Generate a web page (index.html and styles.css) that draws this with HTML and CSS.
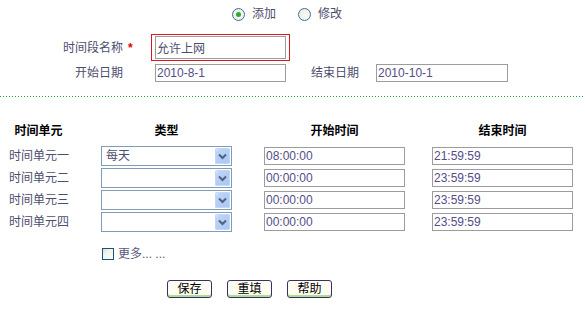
FILE: index.html
```html
<!DOCTYPE html>
<html lang="zh-CN">
<head>
    <meta charset="UTF-8">
    <title>时间段设置</title>
    <link rel="stylesheet" href="styles.css">
</head>
<body>
    <div class="mode">
        <label class="radio"><span class="radio-dot on"></span>添加</label>
        <label class="radio"><span class="radio-dot"></span>修改</label>
    </div>

    <div class="row name-row">
        <span class="label">时间段名称</span><span class="req">*</span>
        <div class="req-box"><input class="text name" type="text" value="允许上网"></div>
    </div>
    <div class="row date-row">
        <span class="label">开始日期</span>
        <input class="text date start-date" type="text" value="2010-8-1">
        <span class="end-label">结束日期</span>
        <input class="text date end-date" type="text" value="2010-10-1">
    </div>

    <div class="divider"></div>

    <div class="units">
        <div class="head c-unit">时间单元</div>
        <div class="head c-type">类型</div>
        <div class="head c-start">开始时间</div>
        <div class="head c-end">结束时间</div>

        <div class="unit c-unit">时间单元一</div>
        <div class="c-type"><div class="select"><span class="select-text">每天</span><span class="drop"><svg width="15" height="16" viewBox="0 0 15 16"><path d="M4 6.5 L7.5 10 L11 6.5" fill="none" stroke="#4d6185" stroke-width="2"/></svg></span></div></div>
        <div class="c-start"><input class="text time" type="text" value="08:00:00"></div>
        <div class="c-end"><input class="text time" type="text" value="21:59:59"></div>

        <div class="unit c-unit">时间单元二</div>
        <div class="c-type"><div class="select"><span class="select-text"></span><span class="drop"><svg width="15" height="16" viewBox="0 0 15 16"><path d="M4 6.5 L7.5 10 L11 6.5" fill="none" stroke="#4d6185" stroke-width="2"/></svg></span></div></div>
        <div class="c-start"><input class="text time" type="text" value="00:00:00"></div>
        <div class="c-end"><input class="text time" type="text" value="23:59:59"></div>

        <div class="unit c-unit">时间单元三</div>
        <div class="c-type"><div class="select"><span class="select-text"></span><span class="drop"><svg width="15" height="16" viewBox="0 0 15 16"><path d="M4 6.5 L7.5 10 L11 6.5" fill="none" stroke="#4d6185" stroke-width="2"/></svg></span></div></div>
        <div class="c-start"><input class="text time" type="text" value="00:00:00"></div>
        <div class="c-end"><input class="text time" type="text" value="23:59:59"></div>

        <div class="unit c-unit">时间单元四</div>
        <div class="c-type"><div class="select"><span class="select-text"></span><span class="drop"><svg width="15" height="16" viewBox="0 0 15 16"><path d="M4 6.5 L7.5 10 L11 6.5" fill="none" stroke="#4d6185" stroke-width="2"/></svg></span></div></div>
        <div class="c-start"><input class="text time" type="text" value="00:00:00"></div>
        <div class="c-end"><input class="text time" type="text" value="23:59:59"></div>
    </div>

    <label class="more"><span class="check"></span>更多... ...</label>

    <div class="buttons">
        <button class="btn">保存</button>
        <button class="btn">重填</button>
        <button class="btn">帮助</button>
    </div>
</body>
</html>
```

FILE: styles.css
```css
body {
    margin: 0;
    padding: 0;
    background: #fff;
    font-family: "Liberation Sans", "Noto Sans CJK SC", sans-serif;
    font-size: 12px;
    line-height: 14px;
    color: #4d4d6d;
}

/* 添加 / 修改 */
.mode {
    display: flex;
    justify-content: center;
    align-items: center;
    height: 28px;
    padding-right: 11px;
    gap: 22px;
}
.radio {
    display: flex;
    align-items: center;
    gap: 7px;
}
.radio-dot {
    position: relative;
    width: 11px;
    height: 11px;
    border: 1px solid #3d6ea8;
    border-radius: 50%;
    background: radial-gradient(circle at 60% 60%, #fbfaf3 0%, #f0eee0 70%, #dcdcd0 100%);
}
.radio-dot.on::after {
    content: "";
    position: absolute;
    left: 3px;
    top: 3px;
    width: 5px;
    height: 5px;
    border-radius: 50%;
    background: #2fa83a;
}

/* 表单行 */
.row {
    display: flex;
    align-items: center;
}
.label {
    width: 123px;
    text-align: right;
}
.req {
    width: 6px;
    margin-left: 5px;
    color: #e00000;
    font-weight: bold;
}
.name-row {
    margin-top: 6px;
}
.req-box {
    margin-left: 17px;
    padding: 1px 3px;
    border: 1px solid #e0161c;
}
.text {
    box-sizing: border-box;
    margin: 0;
    padding: 0 1px;
    border: 1px solid #9c9c9c;
    font-family: "Liberation Sans", "Noto Sans CJK SC", sans-serif;
    font-size: 12px;
    color: #544d88;
    background: #fff;
    outline: none;
}
.text.name {
    width: 131px;
    height: 23px;
    color: #4d4d6d;
}
.date-row {
    margin-top: 3px;
}
.text.date {
    height: 18px;
}
.start-date {
    width: 131px;
    margin-left: 32px;
}
.end-label {
    margin-left: 25px;
}
.end-date {
    width: 132px;
    margin-left: 17px;
}

/* 绿色点线 */
.divider {
    height: 1px;
    margin-top: 14px;
    background: repeating-linear-gradient(to right, #1ea03c 0 1px, transparent 1px 3px);
}

/* 时间单元表 */
.units {
    display: grid;
    grid-template-columns: 77px 155px 173px 168px;
    grid-template-rows: 24px repeat(4, 20px);
    row-gap: 2px;
    margin-top: 23px;
}
.head {
    line-height: 22px;
    text-align: center;
    font-weight: bold;
    color: #000;
}
.c-type {
    padding-left: 24px;
}
.c-start {
    padding-left: 32px;
}
.c-end {
    padding-left: 27px;
}
.unit {
    align-self: center;
    text-align: center;
    padding-left: 1px;
}
.select {
    box-sizing: border-box;
    display: flex;
    align-items: center;
    justify-content: space-between;
    width: 131px;
    height: 20px;
    border: 1px solid #7f9db9;
    background: #fff;
}
.select-text {
    padding-left: 4px;
}
.drop {
    display: flex;
    width: 15px;
    height: 16px;
    margin-right: 1px;
    border-radius: 2px;
    background: linear-gradient(135deg, #f4f8ff 0%, #bcd4f6 20%, #a7c6f1 100%);
    box-shadow: inset 0 0 0 1px #c3d6f7;
}
.text.time {
    width: 141px;
    height: 18px;
    margin-top: 1px;
}

/* 更多 */
.more {
    display: flex;
    align-items: center;
    gap: 4px;
    margin-top: 15px;
    padding-left: 102px;
    color: #5a5a7a;
}
.check {
    box-sizing: border-box;
    width: 12px;
    height: 12px;
    border: 1px solid #1c5180;
    background: linear-gradient(135deg, #cfe8c8 0%, #f4f3ea 35%, #fbfbf6 100%);
}

/* 按钮 */
.buttons {
    display: flex;
    gap: 15px;
    margin-top: 19px;
    padding-left: 167px;
}
.btn {
    box-sizing: border-box;
    width: 45px;
    height: 18px;
    padding: 0;
    border: 1px solid #3d2e6b;
    border-radius: 3px;
    background: #fffcf2;
    box-shadow: inset 0 -2px 0 #a8e090;
    font-family: "Liberation Sans", "Noto Sans CJK SC", sans-serif;
    font-size: 12px;
    line-height: 14px;
    color: #000;
    cursor: pointer;
}
```
